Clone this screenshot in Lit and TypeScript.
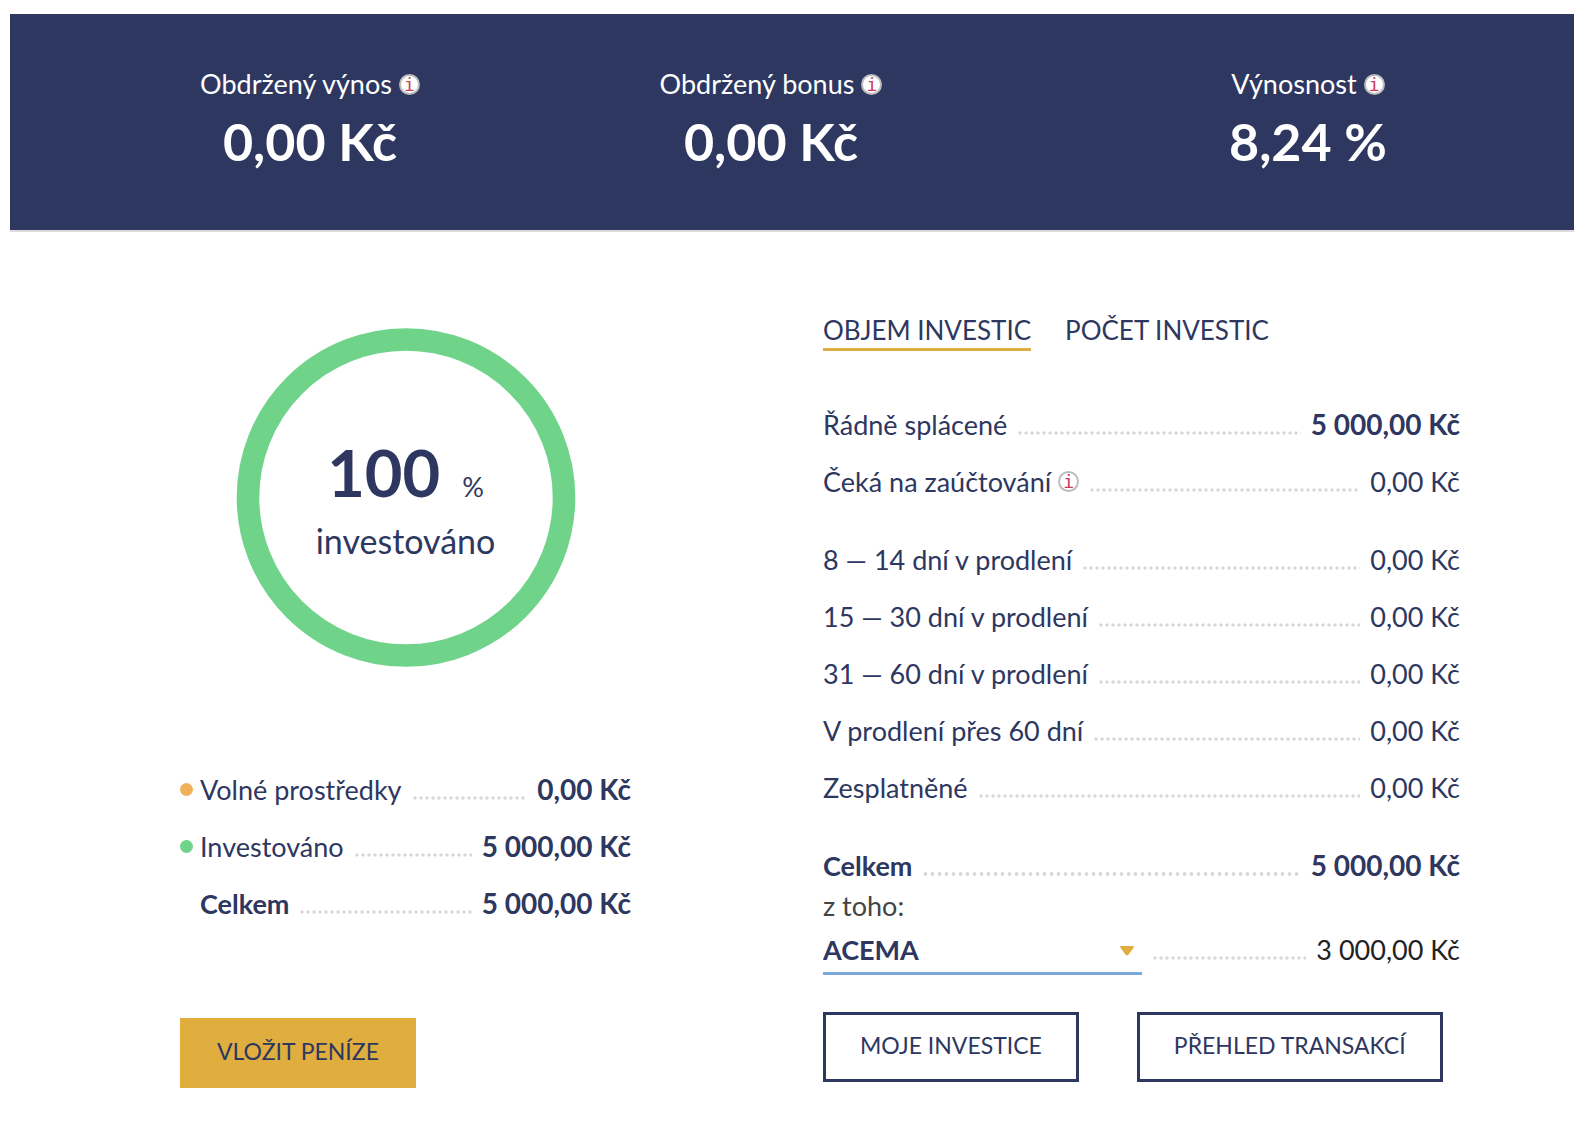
import { LitElement, html, css, svg, nothing } from "lit";
import { customElement, property, state } from "lit/decorators.js";

interface Row {
  label: string;
  value: string;
  info?: boolean;
  strong?: boolean;
  total?: boolean;
  dot?: "free" | "invested" | "none";
}

const funds: Row[] = [
  { label: "Volné prostředky", value: "0,00 Kč", strong: true, dot: "free" },
  { label: "Investováno", value: "5 000,00 Kč", strong: true, dot: "invested" },
  { label: "Celkem", value: "5 000,00 Kč", strong: true, total: true, dot: "none" },
];

const groups: Row[][] = [
  [
    { label: "Řádně splácené", value: "5 000,00 Kč", strong: true },
    { label: "Čeká na zaúčtování", value: "0,00 Kč", info: true },
  ],
  [
    { label: "8 — 14 dní v prodlení", value: "0,00 Kč" },
    { label: "15 — 30 dní v prodlení", value: "0,00 Kč" },
    { label: "31 — 60 dní v prodlení", value: "0,00 Kč" },
    { label: "V prodlení přes 60 dní", value: "0,00 Kč" },
    { label: "Zesplatněné", value: "0,00 Kč" },
  ],
  [{ label: "Celkem", value: "5 000,00 Kč", strong: true, total: true }],
];

@customElement("info-badge")
export class InfoBadge extends LitElement {
  static styles = css`
    :host {
      display: inline-flex;
    }
    .badge {
      width: 21px;
      height: 21px;
      padding: 0;
      box-sizing: border-box;
      border: 2px solid #bdbdbd;
      border-radius: 50%;
      background: #fff;
      color: #cc3c60;
      font: 18px/18px "DejaVu Sans Mono", monospace;
      text-align: center;
      cursor: pointer;
    }
  `;

  render() {
    return html`<button class="badge" type="button">i</button>`;
  }
}

@customElement("leader-row")
export class LeaderRow extends LitElement {
  @property({ attribute: false }) row!: Row;

  static styles = css`
    :host {
      display: flex;
      align-items: baseline;
      line-height: 57px;
      white-space: nowrap;
    }
    .label {
      display: flex;
      align-items: baseline;
      gap: 7px;
    }
    .dot,
    .info {
      align-self: center;
    }
    .dot {
      width: 13px;
      height: 13px;
      border-radius: 50%;
    }
    .free {
      background: #f2b05c;
    }
    .invested {
      background: #6fd48a;
    }
    .leader {
      flex: 1;
      height: 4px;
      margin: 0 10px;
      background: radial-gradient(circle, #d6d6d6 30%, transparent 60%) 0 0 / 6px 4px;
    }
    .leader.wide {
      background: radial-gradient(circle, #d6d6d6 35%, transparent 55%) 0 0 / 7px 4px;
    }
    .strong {
      font-weight: 700;
    }
    .amount {
      font-size: 28px;
    }
  `;

  render() {
    const { label, value, info, strong, total, dot } = this.row;
    return html`
      <span class="label ${total ? "strong" : ""}">
        ${dot ? html`<span class="dot ${dot}"></span>` : nothing}
        <span>${label}</span>
        ${info ? html`<info-badge class="info"></info-badge>` : nothing}
      </span>
      <span class="leader ${total && !dot ? "wide" : ""}"></span>
      <span class=${strong ? "strong amount" : ""}>${value}</span>
    `;
  }
}

@customElement("app-root")
export class AppRoot extends LitElement {
  @state() private tab = 0;

  static styles = css`
    :host {
      display: block;
      padding: 14px 20px 50px 10px;
      background: #fff;
      color: #2d3760;
      font: 27px/36px Lato, "Open Sans", sans-serif;
    }
    button,
    select {
      font: inherit;
      color: inherit;
      cursor: pointer;
    }
    .banner {
      display: grid;
      grid-template-columns: 380fr 542fr 532fr;
      padding: 53px 0 59px 110px;
      background: #2d3760;
      border-bottom: 2px solid #dcdade;
      color: #fff;
    }
    .stat {
      display: flex;
      flex-direction: column;
      align-items: center;
      gap: 10px;
    }
    .stat-label {
      display: flex;
      align-items: center;
      gap: 7px;
      line-height: 34px;
    }
    .stat-value {
      font-size: 52px;
      line-height: 60px;
      font-weight: 700;
    }
    .main {
      display: grid;
      grid-template-columns: 451fr 637fr;
      gap: 192px;
      padding: 80px 114px 0 170px;
    }
    .funds {
      display: flex;
      flex-direction: column;
      align-items: stretch;
      padding-top: 16px;
    }
    .chart {
      display: grid;
      place-items: center;
      margin-bottom: 94px;
    }
    .ring,
    .chart-text {
      grid-area: 1 / 1;
    }
    .ring {
      width: 340px;
      height: 339px;
    }
    .chart-text {
      display: flex;
      flex-direction: column;
      align-items: center;
      padding-top: 10px;
    }
    .percent {
      display: flex;
      align-items: baseline;
      gap: 22px;
      line-height: 62px;
    }
    .number {
      font-size: 65px;
      font-weight: 700;
    }
    .caption {
      font-size: 34px;
      line-height: 46px;
    }
    .tabs {
      display: flex;
      gap: 34px;
      margin-bottom: 45px;
    }
    .tab {
      padding: 0;
      border: 0;
      border-bottom: 3px solid transparent;
      background: none;
      font-size: 26px;
    }
    .tab.active {
      border-bottom-color: #e0ad3f;
    }
    .groups {
      display: flex;
      flex-direction: column;
      gap: 21px;
    }
    .of-which {
      display: block;
      line-height: 24px;
      color: #444;
    }
    .provider {
      display: flex;
      align-items: baseline;
      gap: 10px;
      margin-top: 8px;
      color: #222;
      white-space: nowrap;
    }
    .picker {
      display: grid;
      align-items: center;
      flex: 0 0 50%;
    }
    .select,
    .arrow {
      grid-area: 1 / 1;
    }
    .select {
      appearance: none;
      width: 100%;
      height: 49px;
      padding: 2px 0 0;
      border: 0;
      border-bottom: 3px solid #78a9da;
      border-radius: 0;
      background: none;
      color: #2d3760;
      font-weight: 700;
    }
    .arrow {
      justify-self: end;
      width: 14px;
      height: 10px;
      margin-right: 8px;
      pointer-events: none;
    }
    .leader {
      flex: 1;
      height: 4px;
      background: radial-gradient(circle, #d6d6d6 30%, transparent 60%) 0 0 / 6px 4px;
    }
    .actions {
      display: flex;
      gap: 58px;
      margin-top: 37px;
    }
    .button {
      height: 70px;
      padding: 0 34px 4px;
      border: 3px solid #2d3760;
      background: #fff;
      font-size: 23px;
      white-space: nowrap;
    }
    .button.primary {
      align-self: flex-start;
      margin-top: 86px;
      border-color: #e0ad3f;
      background: #e0ad3f;
    }
  `;

  private stat(label: string, value: string) {
    return html`
      <div class="stat">
        <span class="stat-label">${label}<info-badge></info-badge></span>
        <strong class="stat-value">${value}</strong>
      </div>
    `;
  }

  render() {
    return html`
      <header class="banner">
        ${this.stat("Obdržený výnos", "0,00 Kč")}
        ${this.stat("Obdržený bonus", "0,00 Kč")}
        ${this.stat("Výnosnost", "8,24 %")}
      </header>
      <main class="main">
        <section class="funds">
          <div class="chart">
            <svg class="ring" viewBox="0 0 340 339" aria-hidden="true">
              ${svg`<circle cx="170" cy="169.5" r="158" fill="none" stroke="#6fd48a" stroke-width="22.6" />`}
            </svg>
            <div class="chart-text">
              <div class="percent"><span class="number">100</span><span>%</span></div>
              <span class="caption">investováno</span>
            </div>
          </div>
          ${funds.map((row) => html`<leader-row .row=${row}></leader-row>`)}
          <button class="button primary" type="button">VLOŽIT PENÍZE</button>
        </section>
        <section>
          <div class="tabs" role="tablist">
            ${["OBJEM INVESTIC", "POČET INVESTIC"].map(
              (name, i) => html`<button
                class="tab ${this.tab === i ? "active" : ""}"
                type="button"
                role="tab"
                aria-selected=${this.tab === i}
                @click=${() => (this.tab = i)}
              >${name}</button>`,
            )}
          </div>
          <div class="groups">
            ${groups.map(
              (rows) => html`<div>${rows.map((row) => html`<leader-row .row=${row}></leader-row>`)}</div>`,
            )}
          </div>
          <label class="of-which" for="provider">z toho:</label>
          <div class="provider">
            <div class="picker">
              <select class="select" id="provider">
                <option>ACEMA</option>
              </select>
              <svg class="arrow" viewBox="0 0 14 10" aria-hidden="true">
                <path d="M1.2 0h11.6q1.6 0 .9 1.4L8.600 8.500Q7 10.200 5.400 8.500L.3 1.400Q-.4 0 1.200 0Z" fill="#e0ad3f" />
              </svg>
            </div>
            <span class="leader"></span>
            <span>3 000,00 Kč</span>
          </div>
          <div class="actions">
            <button class="button" type="button">MOJE INVESTICE</button>
            <button class="button" type="button">PŘEHLED TRANSAKCÍ</button>
          </div>
        </section>
      </main>
    `;
  }
}
